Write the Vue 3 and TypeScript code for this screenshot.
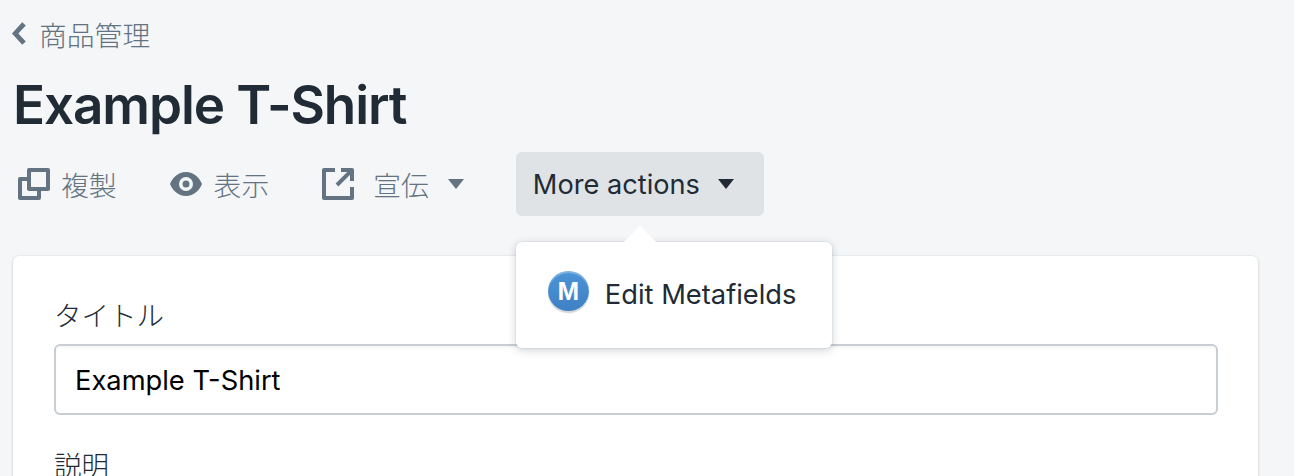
<script setup lang="ts">
const actions = [
  { label: '複製', icon: 'copy' },
  { label: '表示', icon: 'eye' },
  { label: '宣伝', icon: 'share' },
]
</script>

<template>
  <div class="page">
    <a class="back">
      <svg class="chev" viewBox="0 0 16 26" width="16" height="26"><path d="M13 2.800 4.200 12.500 13 22.200" fill="none" stroke="#637381" stroke-width="4.800"/></svg>
      <span>商品管理</span>
    </a>
    <h1 class="title">Example T-Shirt</h1>
    <div class="actions">
      <button v-for="a in actions" :key="a.label" class="action" :class="'action-' + a.icon">
        <svg v-if="a.icon === 'copy'" viewBox="0 0 32 32" width="32" height="32"><path fill="#637381" d="M11 0h19a2 2 0 0 1 2 2v19a2 2 0 0 1-2 2h-7v7a2 2 0 0 1-2 2H2a2 2 0 0 1-2-2V11a2 2 0 0 1 2-2h7V2a2 2 0 0 1 2-2Zm2 4v15h15V4H13ZM4 13v15h15v-5h-8a2 2 0 0 1-2-2v-8H4Z"/></svg>
        <svg v-else-if="a.icon === 'eye'" viewBox="0 0 32 24" width="32" height="24"><path fill="#637381" fill-rule="evenodd" d="M16 0c8 0 13.500 6 16 12-2.500 6-8 12-16 12S2.500 18 0 12C2.500 6 8 0 16 0Zm0 5a7 7 0 1 0 0 14 7 7 0 0 0 0-14Zm0 3.500a3.500 3.500 0 1 1 0 7 3.500 3.500 0 0 1 0-7Z"/></svg>
        <svg v-else viewBox="0 0 32 32" width="32" height="32"><path fill="#637381" d="M2 0h11v4H4v24h24v-9h4v11a2 2 0 0 1-2 2H2a2 2 0 0 1-2-2V2a2 2 0 0 1 2-2Zm17 0h11a2 2 0 0 1 2 2v11h-4V6.800L16.400 18.400l-2.800-2.800L25.200 4H19V0Z"/></svg>
        <span>{{ a.label }}</span>
        <svg v-if="a.icon === 'share'" class="caret" viewBox="0 0 16 10" width="16" height="10"><path fill="#637381" d="M0 0h16L8 10z"/></svg>
      </button>
      <div class="more-wrap">
        <button class="more">
          <span>More actions</span>
          <svg class="caret-dark" viewBox="0 0 16 10" width="16" height="10"><path fill="#212b36" d="M0 0h16L8 10z"/></svg>
        </button>
        <div class="popover">
          <span class="arrow"></span>
          <div class="item">
            <span class="badge">M</span>
            <span class="item-text">Edit Metafields</span>
          </div>
        </div>
      </div>
    </div>
    <section class="card">
      <label class="label">タイトル</label>
      <input class="input" value="Example T-Shirt" />
      <label class="label desc">説明</label>
    </section>
  </div>
</template>

<style scoped>
.page {
  box-sizing: border-box;
  height: 476px;
  overflow: hidden;
  padding: 14px 36px 0 13px;
  background: #f4f6f8;
  font-family: Inter, "Noto Sans CJK JP", sans-serif;
  color: #212b36;
}
.back {
  display: flex;
  align-items: center;
  gap: 12px;
  height: 40px;
  font-size: 27.800px;
  color: #637381;
  font-family: "Noto Sans CJK JP", sans-serif;
  font-weight: 300;
}
.chev { margin-left: -2px; }
.title {
  margin: 19px 0 0 0;
  height: 64px;
  line-height: 64px;
  font-size: 53px;
  font-weight: 600;
  letter-spacing: -1.100px;
}
.actions {
  display: flex;
  align-items: center;
  margin-top: 15px;
  height: 64px;
}
.action {
  display: flex;
  align-items: center;
  gap: 12px;
  border: 0;
  padding: 0;
  background: none;
  font: inherit;
  font-family: "Noto Sans CJK JP", sans-serif;
  font-weight: 300;
  font-size: 27.800px;
  color: #637381;
}
.action-copy { margin-left: 5px; }
.action-copy span { margin-left: -1px; }
.action-eye { margin-left: 53px; }
.action-share { margin-left: 53px; gap: 19px; }
.caret { margin-left: 0; }
.more-wrap { position: relative; margin-left: 52px; }
.more {
  display: flex;
  align-items: center;
  gap: 18px;
  width: 248px;
  height: 64px;
  padding: 0 17px;
  box-sizing: border-box;
  border: 0;
  border-radius: 6px;
  background: #dfe3e6;
  font: inherit;
  font-size: 27.200px;
  color: #212b36;
}
.popover {
  position: absolute;
  top: 90px;
  left: 0;
  width: 316px;
  height: 106px;
  border-radius: 6px;
  background: #fff;
  box-shadow: 0 0 0 1px rgba(6, 44, 82, .04), 0 2px 8px rgba(33, 43, 54, .22);
  z-index: 2;
}
.arrow {
  position: absolute;
  top: -16px;
  left: 108px;
  width: 0;
  height: 0;
  border-left: 16px solid transparent;
  border-right: 16px solid transparent;
  border-bottom: 16px solid #fff;
}
.item {
  display: flex;
  align-items: center;
  gap: 16px;
  height: 106px;
  padding-left: 32px;
  font-size: 27.300px;
  color: #212b36;
}
.item-text { margin-top: -2px; }
.badge {
  display: flex;
  align-items: center;
  justify-content: center;
  width: 41px;
  height: 40px;
  margin-top: -8px;
  border-radius: 50%;
  background: linear-gradient(#4b94d6, #3f80c4);
  box-shadow: inset 0 2px 1px rgba(255, 255, 255, .3), 0 2px 1px rgba(33, 43, 54, .2);
  color: #fff;
  font-family: "Liberation Sans", sans-serif;
  font-weight: 700;
  font-size: 26px;
}
.card {
  margin-top: 40px;
  padding: 39px 40px 0 41px;
  height: 240px;
  background: #fff;
  border-radius: 6px;
  box-shadow: 0 0 0 1px rgba(63, 63, 68, .03), 0 1px 3px rgba(63, 63, 68, .2);
}
.label {
  display: block;
  height: 38px;
  line-height: 38px;
  font-family: "Noto Sans CJK JP", sans-serif;
  font-weight: 300;
  font-size: 27.500px;
  color: #212b36;
}
.input {
  display: block;
  box-sizing: border-box;
  width: 100%;
  height: 71px;
  margin-top: 11px;
  padding: 1px 19px 0;
  border: 2px solid #c9cdd4;
  border-radius: 6px;
  background: #fff;
  font-family: Inter, sans-serif;
  font-size: 27.300px;
  color: #000;
  outline: none;
  box-shadow: inset 0 2px 2px rgba(102, 113, 123, .06);
}
.desc { margin-top: 30px; }
</style>
